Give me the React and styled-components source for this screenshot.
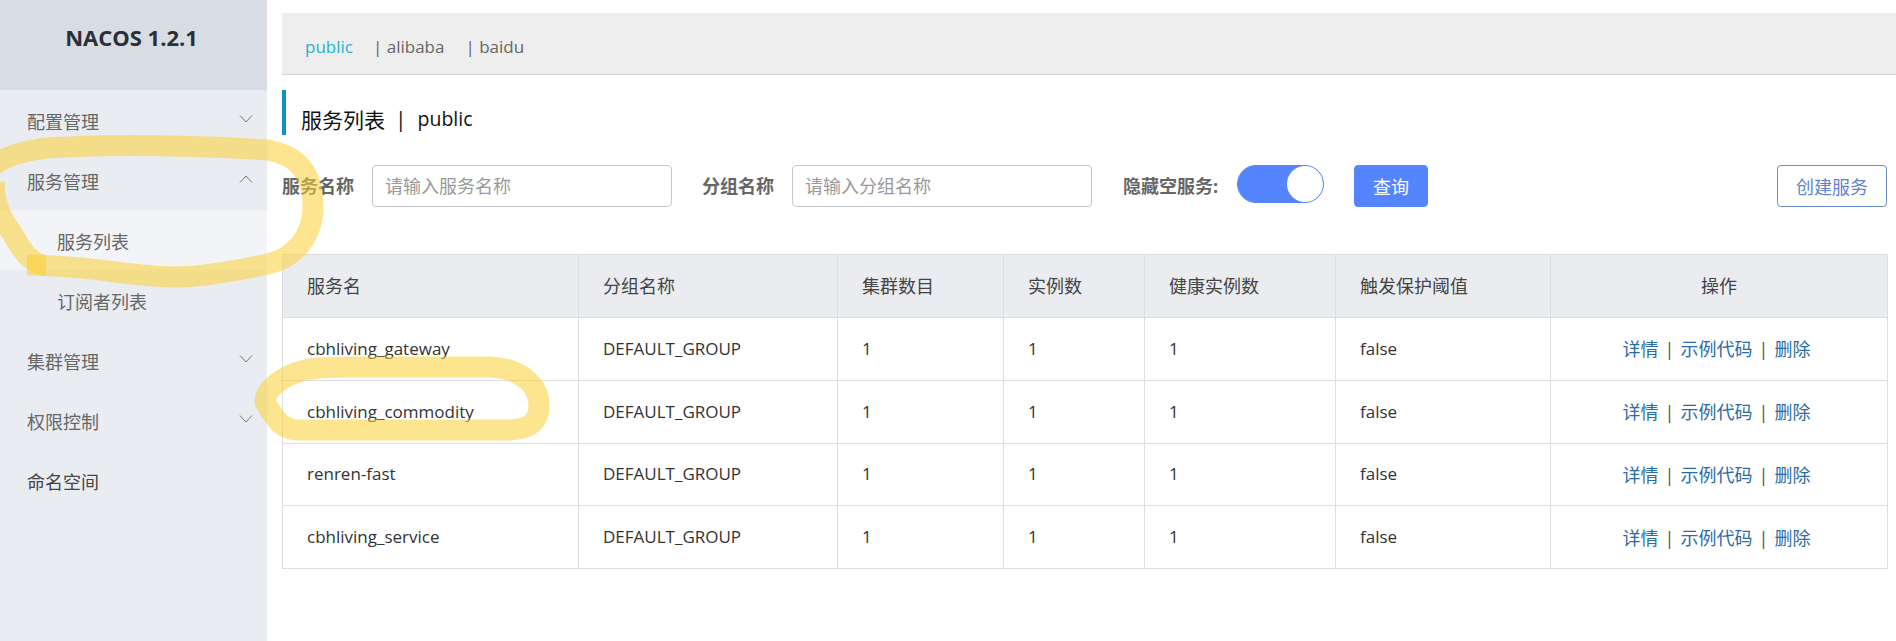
import React from 'react';
import styled, { createGlobalStyle } from 'styled-components';

const GlobalStyle = createGlobalStyle`
  html, body {
    margin: 0;
    padding: 0;
    background: #fff;
    overflow: hidden;
  }
  body {
    font-family: "Open Sans", "Noto Sans CJK SC", sans-serif;
    color: #333;
  }
`;

const Page = styled.div`
  position: relative;
  display: flex;
  width: 1896px;
  height: 641px;
  overflow: hidden;
`;

const Sidebar = styled.aside`
  width: 267px;
  flex: none;
  background: #e9edf2;
`;

const Brand = styled.div`
  height: 77px;
  padding: 13px 4px 0 0;
  background: #d8dde4;
  color: #2b2f36;
  font-size: 22px;
  font-weight: 700;
  line-height: 48px;
  text-align: center;
`;

const NavItem = styled.div`
  display: flex;
  align-items: center;
  justify-content: space-between;
  box-sizing: border-box;
  height: 60px;
  padding: 2px 14px 0 ${(p) => (p.$sub ? '57px' : '27px')};
  background: ${(p) => (p.$active ? '#f2f4f7' : 'transparent')};
  color: ${(p) => (p.$dark ? '#444' : '#666')};
  font-size: 18px;
`;

const Chevron = styled.svg`
  width: 14px;
  height: 8px;
  margin-top: -4px;
  fill: none;
  stroke: #777;
  stroke-width: 1;
`;

const Main = styled.main`
  flex: 1;
  min-width: 0;
  padding: 13px 9px 0 15px;
`;

const TabBar = styled.div`
  display: flex;
  align-items: center;
  box-sizing: border-box;
  height: 62px;
  margin-right: -9px;
  padding: 5px 0 0 23px;
  background: #eee;
  border-bottom: 1px solid #d6d6d6;
  font-size: 17px;
`;

const Tab = styled.span`
  color: ${(p) => (p.$active ? '#1fb3d0' : '#666')};
  margin-right: ${(p) => p.$gap}px;
`;

const Title = styled.h1`
  display: flex;
  align-items: center;
  gap: 10px;
  height: 45px;
  margin: 15px 0 0;
  padding: 12px 0 0 15px;
  border-left: 4px solid #0f93bd;
  box-sizing: border-box;
  color: #111;
  font-size: 21px;
  font-weight: 400;
`;

const TitleName = styled.span`
  font-size: 19.5px;
  margin-left: 1px;
`;

const FilterRow = styled.div`
  display: flex;
  align-items: flex-start;
  height: 42px;
  margin-top: 30px;
`;

const FilterLabel = styled.label`
  width: ${(p) => p.$width}px;
  margin-left: ${(p) => p.$left || 0}px;
  color: #666;
  font-size: 18px;
  font-weight: 700;
  line-height: 42px;
  white-space: nowrap;
`;

const TextInput = styled.input`
  box-sizing: border-box;
  width: ${(p) => p.$width}px;
  height: 42px;
  padding: 0 12px;
  border: 1px solid #c4c6cf;
  border-radius: 4px;
  background: #fff;
  font-family: inherit;
  font-size: 18px;
  outline: none;

  &::placeholder {
    color: #999;
  }
`;

const Switch = styled.div`
  display: flex;
  justify-content: flex-end;
  box-sizing: border-box;
  width: 87px;
  height: 38px;
  margin-left: 19px;
  background: #5584ff;
  border: 1px solid #5584ff;
  border-radius: 19px;
`;

const Knob = styled.div`
  width: 36px;
  height: 36px;
  border-radius: 50%;
  background: #fff;
`;

const Button = styled.button`
  box-sizing: border-box;
  height: 42px;
  width: ${(p) => p.$width}px;
  margin-left: ${(p) => (p.$push ? 'auto' : '30px')};
  border: 1px solid ${(p) => (p.$outline ? '#6e8fd0' : '#5584ff')};
  border-radius: 4px;
  background: ${(p) => (p.$outline ? '#fff' : '#5584ff')};
  color: ${(p) => (p.$outline ? '#5f84cc' : '#fff')};
  font-family: inherit;
  font-size: 18px;
`;

const Table = styled.table`
  width: 1605px;
  margin-top: 47px;
  border-collapse: collapse;
  table-layout: fixed;
  font-size: 17px;
`;

const Th = styled.th`
  height: 60px;
  padding: 0 0 2px ${(p) => (p.$center ? 0 : 24)}px;
  background: #ebecf0;
  border: 1px solid #dcdee3;
  color: #444;
  font-size: 18px;
  font-weight: 400;
  text-align: ${(p) => (p.$center ? 'center' : 'left')};
`;

const Td = styled.td`
  height: 60.75px;
  padding: 0 0 1px 24px;
  border: 1px solid #dcdee3;
  color: #333;
  text-align: left;
`;

const ActionCell = styled(Td)`
  padding: 0 5px 1px 0;
  text-align: center;
`;

const ActionLink = styled.a`
  color: #2b6ca8;
  font-size: 18px;
`;

const Divider = styled.span`
  margin: 0 6px;
  color: #555;
  font-size: 18px;
`;

const Scribble = styled.svg`
  position: absolute;
  left: 0;
  top: 0;
  width: 1896px;
  height: 641px;
  pointer-events: none;
  fill: none;
`;

const Stroke = styled.path`
  stroke: rgb(251, 208, 51);
  stroke-opacity: 0.55;
  stroke-width: 21;
  stroke-linecap: butt;
  stroke-linejoin: round;
`;

const columns = [296, 259, 166, 141, 191, 215, 337];
const headers = ['服务名', '分组名称', '集群数目', '实例数', '健康实例数', '触发保护阈值'];
const services = ['cbhliving_gateway', 'cbhliving_commodity', 'renren-fast', 'cbhliving_service'];

const Arrow = ({ up }) => (
  <Chevron viewBox="0 0 14 8">
    <polyline points={up ? '1,7.5 7,1 13,7.5' : '1,0.5 7,7 13,0.5'} />
  </Chevron>
);

const App = () => (
  <Page>
    <GlobalStyle />
    <Sidebar>
      <Brand>NACOS 1.2.1</Brand>
      <NavItem>配置管理<Arrow /></NavItem>
      <NavItem>服务管理<Arrow up /></NavItem>
      <NavItem $sub $active>服务列表</NavItem>
      <NavItem $sub>订阅者列表</NavItem>
      <NavItem>集群管理<Arrow /></NavItem>
      <NavItem>权限控制<Arrow /></NavItem>
      <NavItem $dark>命名空间</NavItem>
    </Sidebar>

    <Main>
      <TabBar>
        <Tab $active $gap={20}>public</Tab>
        <Tab $gap={21}>| alibaba</Tab>
        <Tab>| baidu</Tab>
      </TabBar>

      <Title><span>服务列表</span><span>|</span><TitleName>public</TitleName></Title>

      <FilterRow>
        <FilterLabel $width={90}>服务名称</FilterLabel>
        <TextInput $width={300} placeholder="请输入服务名称" />
        <FilterLabel $left={30} $width={90}>分组名称</FilterLabel>
        <TextInput $width={300} placeholder="请输入分组名称" />
        <FilterLabel $left={31} $width={95}>隐藏空服务:</FilterLabel>
        <Switch><Knob /></Switch>
        <Button $width={74}>查询</Button>
        <Button $width={110} $outline $push>创建服务</Button>
      </FilterRow>

      <Table>
        <colgroup>
          {columns.map((w) => <col key={w} width={w} />)}
        </colgroup>
        <thead>
          <tr>
            {headers.map((h) => <Th key={h}>{h}</Th>)}
            <Th $center>操作</Th>
          </tr>
        </thead>
        <tbody>
          {services.map((name) => (
            <tr key={name}>
              <Td>{name}</Td>
              <Td>DEFAULT_GROUP</Td>
              <Td>1</Td>
              <Td>1</Td>
              <Td>1</Td>
              <Td>false</Td>
              <ActionCell>
                <ActionLink>详情</ActionLink>
                <Divider>|</Divider>
                <ActionLink>示例代码</ActionLink>
                <Divider>|</Divider>
                <ActionLink>删除</ActionLink>
              </ActionCell>
            </tr>
          ))}
        </tbody>
      </Table>
    </Main>

    <Scribble viewBox="0 0 1896 641">
      <Stroke d="M-8 166 C12 152 40 147 70 147 C130 144 200 146 268 150 C295 155 313 170 313 207 C313 235 295 258 268 264 C240 270 205 277 175 277 C130 277 90 265 27 265" />
      <Stroke d="M-6 182 C-5 200 -2 215 12 233 C22 250 30 265 46 265" />
      <Stroke d="M283 379 C300 368 320 367 350 367 L490 367 C520 368 539 385 539 405 C539 425 526 430 506 430 L300 430 C285 430 278 425 265 402 C265 392 273 385 283 379 Z" />
    </Scribble>
  </Page>
);

export default App;
